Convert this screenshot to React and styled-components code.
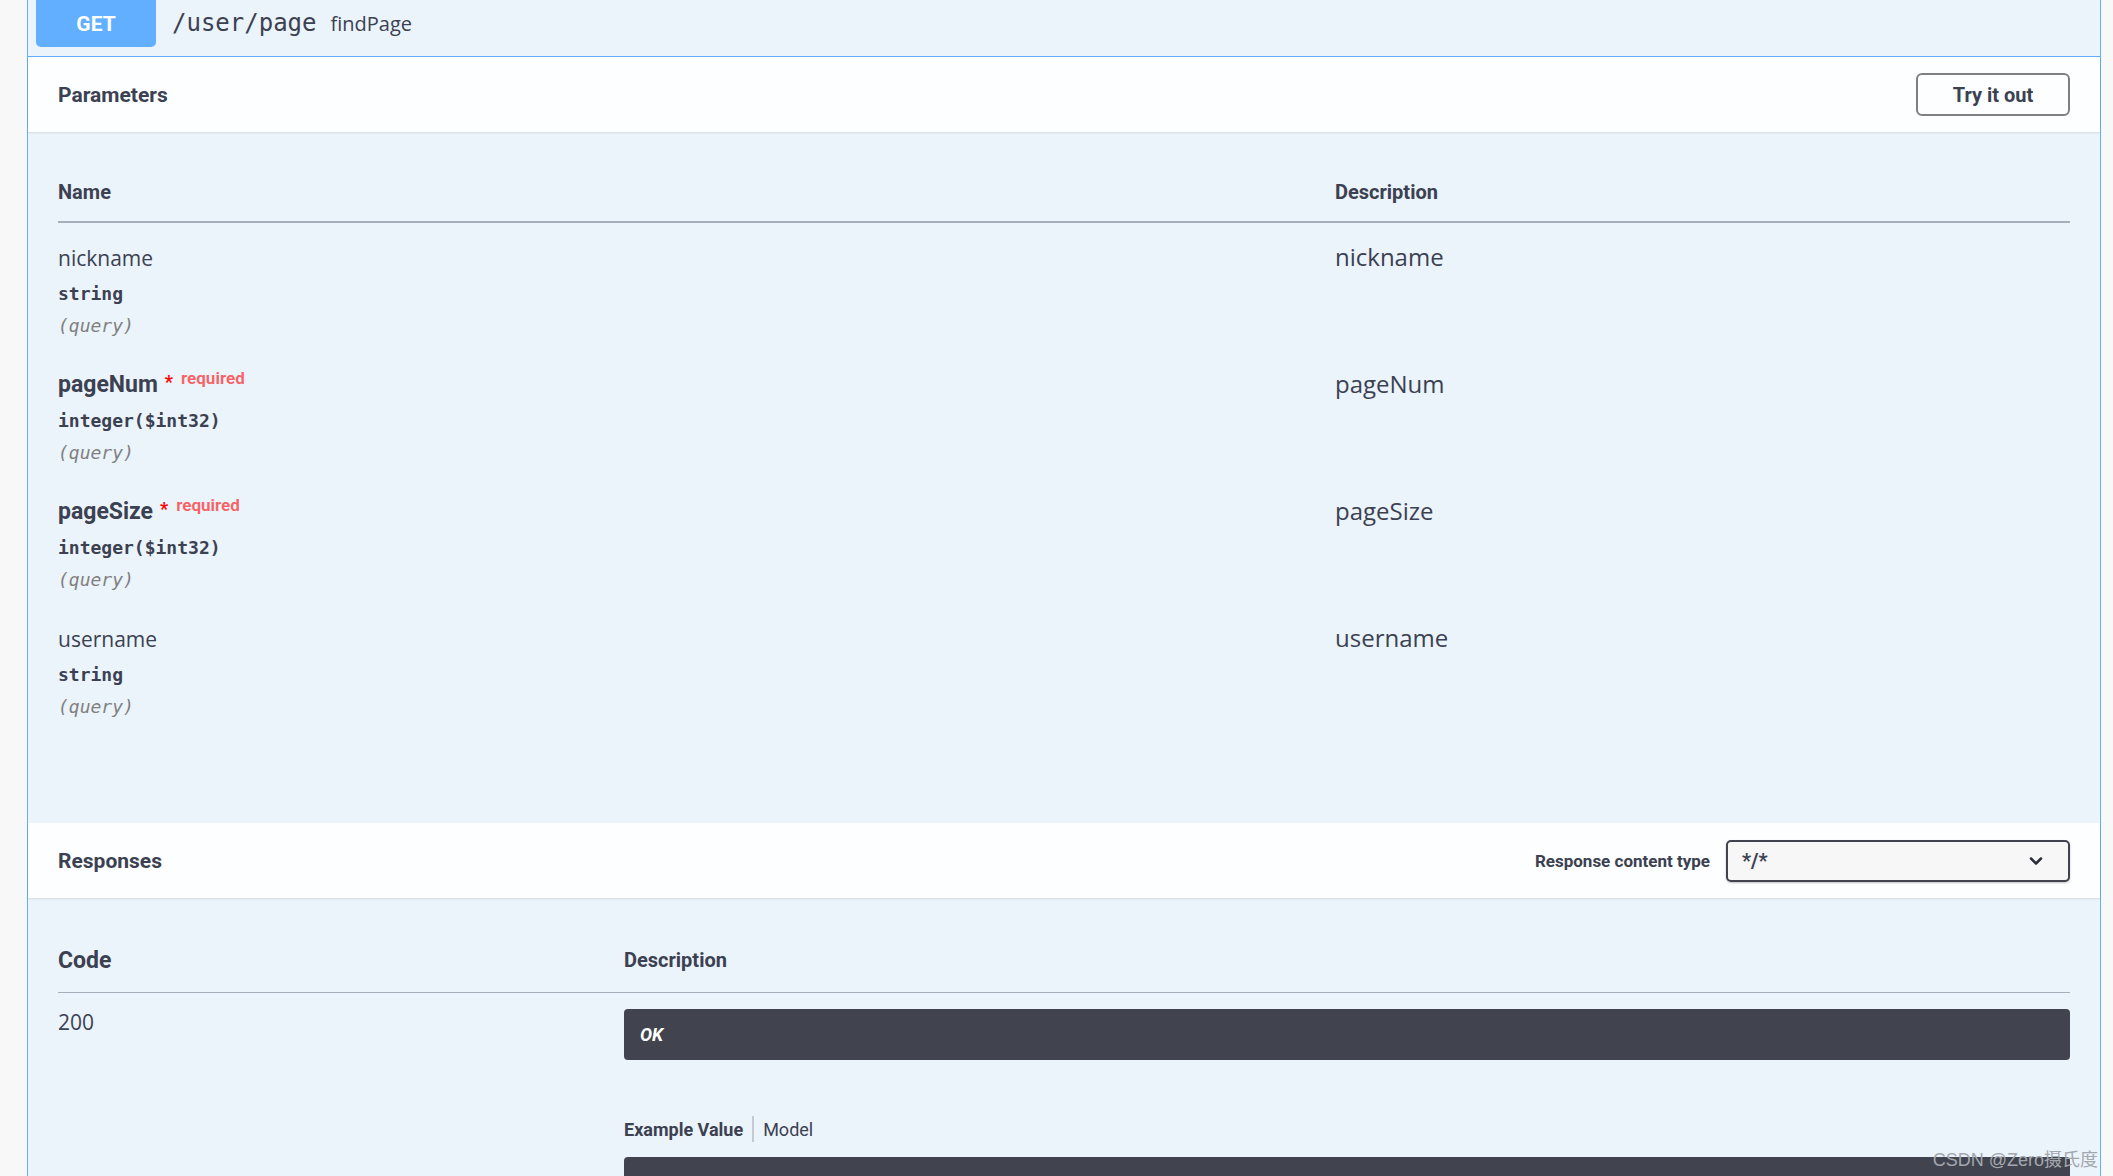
import React from "react";
import styled, { createGlobalStyle } from "styled-components";

const GlobalStyle = createGlobalStyle`
  html, body {
    margin: 0;
    padding: 0;
    height: 1176px;
    overflow: hidden;
    background: #f8f8f8;
  }
`;

const headFont = `"Roboto", "Open Sans", sans-serif`;
const bodyFont = `"Open Sans", "Noto Sans", sans-serif`;
const monoFont = `"DejaVu Sans Mono", "Liberation Mono", monospace`;

const params = [
  { name: "nickname", type: "string", required: false },
  { name: "pageNum", type: "integer", format: "($int32)", required: true },
  { name: "pageSize", type: "integer", format: "($int32)", required: true },
  { name: "username", type: "string", required: false },
];

const App = () => {
  return (
    <Page>
      <GlobalStyle />
      <Block>
        <Summary>
          <MethodBadge>GET</MethodBadge>
          <PathText>/user/page</PathText>
          <SummaryDesc>findPage</SummaryDesc>
        </Summary>

        <SectionHeader>
          <SectionTitle>Parameters</SectionTitle>
          <TryButton>Try it out</TryButton>
        </SectionHeader>

        <ParamBody>
          <ParamHead>
            <HeadCell>Name</HeadCell>
            <HeadCell>Description</HeadCell>
          </ParamHead>
          {params.map((p) => (
            <ParamRow key={p.name}>
              <div>
                <ParamName required={p.required}>
                  {p.name}
                  {p.required && (
                    <>
                      <Star>*</Star>
                      <Required>required</Required>
                    </>
                  )}
                </ParamName>
                <ParamType>
                  {p.type}
                  {p.format}
                </ParamType>
                <ParamIn>(query)</ParamIn>
              </div>
              <ParamDesc>{p.name}</ParamDesc>
            </ParamRow>
          ))}
        </ParamBody>

        <SectionHeader>
          <SectionTitle>Responses</SectionTitle>
          <ContentType>
            <ContentLabel>Response content type</ContentLabel>
            <SelectBox>
              <span>*/*</span>
              <svg width="20" height="20" viewBox="0 0 24 24" fill="none" stroke="#2b2f3a" strokeWidth="3" strokeLinecap="round" strokeLinejoin="round">
                <path d="M6 9l6 6 6-6" />
              </svg>
            </SelectBox>
          </ContentType>
        </SectionHeader>

        <ResponseBody>
          <RespHead>
            <CodeHead>Code</CodeHead>
            <HeadCell>Description</HeadCell>
          </RespHead>
          <RespRow>
            <CodeCell>200</CodeCell>
            <div>
              <OkBox>OK</OkBox>
              <Tabs>
                <Tab active>Example Value</Tab>
                <TabDivider />
                <Tab>Model</Tab>
              </Tabs>
              <ExampleBox />
            </div>
          </RespRow>
        </ResponseBody>
      </Block>
      <Watermark>CSDN @Zero摄氏度</Watermark>
    </Page>
  );
};

export default App;

const Page = styled.div`
  position: relative;
  height: 1176px;
  overflow: hidden;
  padding: 0 12px 0 27px;
  box-sizing: border-box;
`;

const Block = styled.div`
  background: #ebf3fb;
  border-left: 1px solid #61affe;
  border-right: 1px solid #61affe;
  color: #3b4151;
  min-height: 1176px;
`;

const Summary = styled.div`
  display: flex;
  align-items: flex-start;
  height: 56px;
  padding: 0 8px;
  border-bottom: 1px solid #61affe;
`;

const MethodBadge = styled.div`
  width: 120px;
  height: 47px;
  background: #61affe;
  border-radius: 0 0 5px 5px;
  color: #fff;
  font-family: ${headFont};
  font-weight: 700;
  font-size: 21px;
  display: flex;
  align-items: center;
  justify-content: center;
`;

const PathText = styled.span`
  margin-left: 16px;
  line-height: 47px;
  font-family: ${monoFont};
  font-size: 24px;
  color: #3b4151;
`;

const SummaryDesc = styled.span`
  margin-left: 14px;
  line-height: 47px;
  font-family: ${bodyFont};
  font-size: 20px;
  color: #3b4151;
`;

const SectionHeader = styled.div`
  height: 75px;
  padding: 0 30px;
  display: flex;
  align-items: center;
  justify-content: space-between;
  background: rgba(255, 255, 255, 0.85);
  box-shadow: 0 1px 2px rgba(0, 0, 0, 0.1);
`;

const SectionTitle = styled.h4`
  margin: 0;
  font-family: ${headFont};
  font-weight: 700;
  font-size: 21px;
  color: #3b4151;
`;

const TryButton = styled.button`
  width: 154px;
  height: 43px;
  border: 2px solid #808080;
  border-radius: 6px;
  background: transparent;
  font-family: ${headFont};
  font-weight: 700;
  font-size: 20px;
  color: #3b4151;
  cursor: pointer;
`;

const ParamBody = styled.div`
  padding: 30px 30px 92px;
`;

const ParamHead = styled.div`
  display: grid;
  grid-template-columns: 1277px 1fr;
  align-items: center;
  height: 59px;
  border-bottom: 2px solid #a6aebb;
`;

const HeadCell = styled.div`
  font-family: ${headFont};
  font-weight: 700;
  font-size: 20px;
  color: #3b4151;
`;

const ParamRow = styled.div`
  display: grid;
  grid-template-columns: 1277px 1fr;
  height: 127px;
  padding-top: 20px;
  box-sizing: border-box;
`;

const ParamName = styled.div`
  display: flex;
  align-items: flex-start;
  height: 30px;
  line-height: 30px;
  font-family: ${(p) => (p.required ? headFont : bodyFont)};
  font-weight: ${(p) => (p.required ? 700 : 400)};
  font-size: ${(p) => (p.required ? "23px" : "21px")};
  color: #3b4151;
`;

const Star = styled.span`
  margin-left: 7px;
  color: red;
  font-size: 18px;
  line-height: 24px;
`;

const Required = styled.span`
  margin-left: 8px;
  color: rgba(255, 0, 0, 0.6);
  font-family: ${headFont};
  font-weight: 700;
  font-size: 17px;
  line-height: 16px;
`;

const ParamType = styled.div`
  margin-top: 9px;
  line-height: 24px;
  font-family: ${monoFont};
  font-weight: 600;
  font-size: 18px;
  color: #3b4151;
`;

const ParamIn = styled.div`
  margin-top: 8px;
  line-height: 24px;
  font-family: ${monoFont};
  font-style: italic;
  font-size: 18px;
  color: #808080;
`;

const ParamDesc = styled.div`
  font-family: ${bodyFont};
  font-size: 24px;
  line-height: 28px;
  color: #3b4151;
`;

const ContentType = styled.div`
  display: flex;
  align-items: center;
  gap: 16px;
`;

const ContentLabel = styled.span`
  font-family: ${headFont};
  font-weight: 700;
  font-size: 17px;
  color: #3b4151;
`;

const SelectBox = styled.div`
  width: 344px;
  height: 42px;
  box-sizing: border-box;
  border: 2px solid #41444e;
  border-radius: 5px;
  background: #f7f7f7;
  box-shadow: 0 1px 2px rgba(0, 0, 0, 0.25);
  display: flex;
  align-items: center;
  justify-content: space-between;
  padding: 0 22px 0 14px;
  font-family: ${headFont};
  font-weight: 700;
  font-size: 20px;
  color: #3b4151;
`;

const ResponseBody = styled.div`
  padding: 30px 30px 0;
`;

const RespHead = styled.div`
  display: grid;
  grid-template-columns: 566px 1fr;
  align-items: center;
  height: 64px;
  border-bottom: 1px solid #a6aebb;
`;

const CodeHead = styled.div`
  font-family: ${headFont};
  font-weight: 700;
  font-size: 23px;
  color: #3b4151;
`;

const RespRow = styled.div`
  display: grid;
  grid-template-columns: 566px 1fr;
  padding-top: 16px;
`;

const CodeCell = styled.div`
  font-family: ${bodyFont};
  font-size: 21px;
  line-height: 30px;
  margin-top: -2px;
  color: #3b4151;
`;

const OkBox = styled.div`
  height: 51px;
  border-radius: 4px;
  background: #41444e;
  color: #fff;
  display: flex;
  align-items: center;
  padding-left: 16px;
  font-family: ${headFont};
  font-weight: 700;
  font-style: italic;
  font-size: 18px;
`;

const Tabs = styled.div`
  display: flex;
  align-items: center;
  height: 30px;
  margin-top: 54px;
`;

const Tab = styled.span`
  font-family: ${headFont};
  font-weight: ${(p) => (p.active ? 700 : 400)};
  font-size: 18px;
  color: #3b4151;
`;

const TabDivider = styled.span`
  width: 2px;
  height: 26px;
  margin: 0 9px;
  background: #c5cad2;
`;

const ExampleBox = styled.div`
  margin-top: 13px;
  height: 80px;
  border-radius: 4px 4px 0 0;
  background: #41444e;
`;

const Watermark = styled.div`
  position: absolute;
  right: 15px;
  top: 1145px;
  font-family: "Liberation Sans", "Noto Sans CJK SC", sans-serif;
  font-size: 18px;
  color: #a3a7ae;
`;
